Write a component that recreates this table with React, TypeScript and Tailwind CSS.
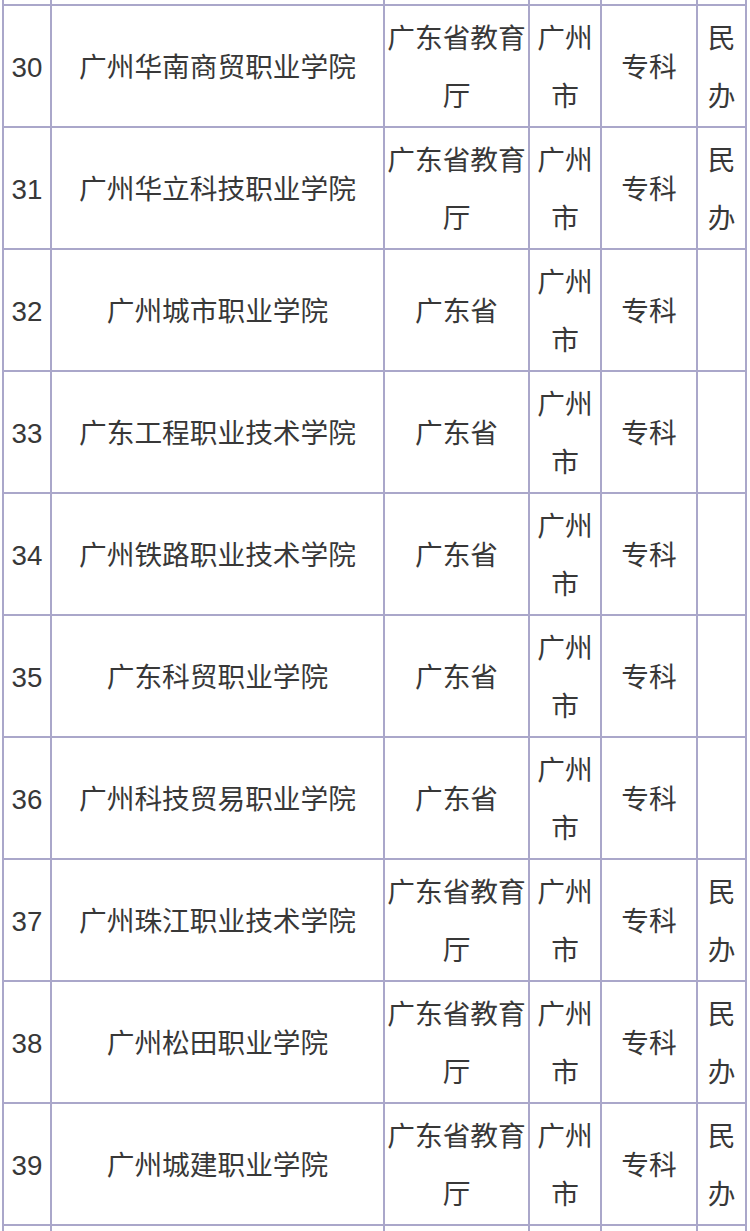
import React from "react";

type Row = [string, string, string, string, string, string];

const rows: Row[] = [
  ["30", "广州华南商贸职业学院", "广东省教育厅", "广州市", "专科", "民办"],
  ["31", "广州华立科技职业学院", "广东省教育厅", "广州市", "专科", "民办"],
  ["32", "广州城市职业学院", "广东省", "广州市", "专科", ""],
  ["33", "广东工程职业技术学院", "广东省", "广州市", "专科", ""],
  ["34", "广州铁路职业技术学院", "广东省", "广州市", "专科", ""],
  ["35", "广东科贸职业学院", "广东省", "广州市", "专科", ""],
  ["36", "广州科技贸易职业学院", "广东省", "广州市", "专科", ""],
  ["37", "广州珠江职业技术学院", "广东省教育厅", "广州市", "专科", "民办"],
  ["38", "广州松田职业学院", "广东省教育厅", "广州市", "专科", "民办"],
  ["39", "广州城建职业学院", "广东省教育厅", "广州市", "专科", "民办"],
];

export default function App() {
  return (
    <div
      className="w-[750px] h-[1231px] bg-white overflow-hidden text-[#383838]"
      style={{ fontFamily: '"Liberation Sans", "Noto Sans CJK SC", sans-serif' }}
    >
      <div className="ml-[2px] w-[745px] bg-[#aaa7ca] grid grid-cols-[46px_331px_143px_70px_94px_47px] gap-[2px] px-[2px] text-[27.7px] leading-[58px]">
        {Array.from({ length: 6 }).map((_, i) => (
          <div key={`t${i}`} className="h-[4px] bg-white" />
        ))}
        {rows.map((r) =>
          r.map((c, i) => (
            <div
              key={`${r[0]}-${i}`}
              className="h-[120px] bg-white flex items-center justify-center text-center px-[1px] pt-[4px]"
            >
              <span className="block w-full break-all">{c}</span>
            </div>
          ))
        )}
        {Array.from({ length: 6 }).map((_, i) => (
          <div key={`b${i}`} className="h-[6px] bg-white" />
        ))}
      </div>
    </div>
  );
}
